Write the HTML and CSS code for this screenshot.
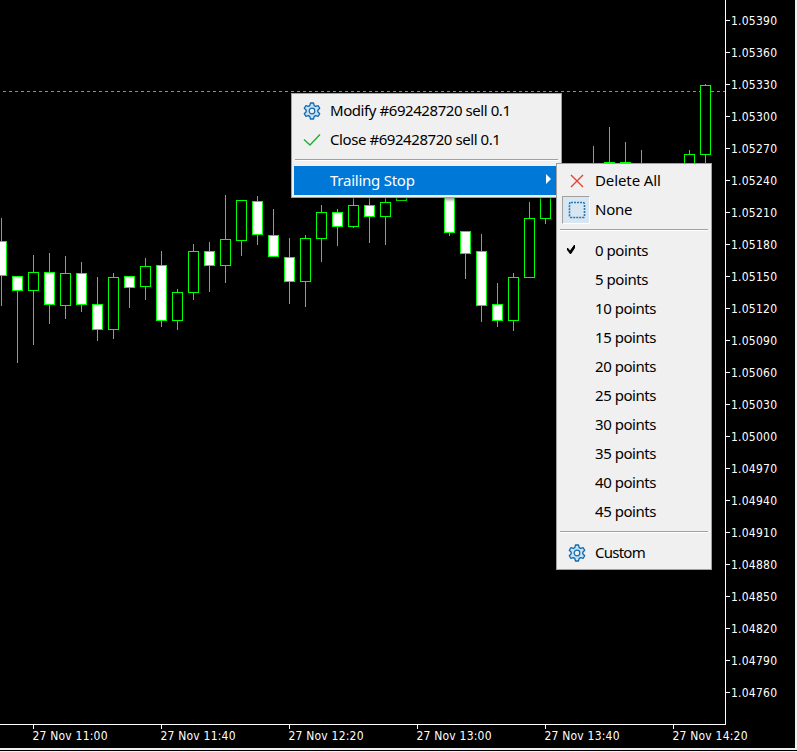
FILE: index.html
```html
<!DOCTYPE html>
<html lang="en">
<head>
<meta charset="utf-8">
<title>Chart</title>
<link rel="stylesheet" href="styles.css">
</head>
<body>
<svg class="chart" id="chart" width="797" height="752" viewBox="0 0 797 752" shape-rendering="crispEdges">
  <path class="price-line" d="M3 91.5H725"/>
  <g id="candles"></g>
  <path class="axis" d="M0 724.5H726M725.5 0V725"/>
  <g id="labels"></g>
  <path class="frame" d="M795 0h2v752H0v-4h795z"/>
  <path class="frame-line" d="M0 750.5H797"/>
</svg>

<svg class="defs" width="0" height="0">
  <symbol id="gear" viewBox="0 0 18 18">
    <path d="M7.500 1h3l.7 2.600 1.400.8 2.600-.7 1.500 2.600-1.900 1.900v1.600l1.900 1.900-1.500 2.600-2.600-.7-1.400.8-.7 2.600h-3l-.7-2.600-1.400-.8-2.600.7-1.500-2.600 1.900-1.900V8.200L1.300 6.300l1.500-2.600 2.600.7 1.400-.8z" fill="#c4e2f8" stroke="#1268aa" stroke-width="1.300" stroke-linejoin="round"/>
    <circle cx="9" cy="9" r="2.800" fill="#f0f0f0" stroke="#1268aa" stroke-width="1.200"/>
  </symbol>
</svg>

<div class="menu menu-main">
  <div class="item"><span class="icon"><svg width="18" height="18"><use href="#gear"/></svg></span><span class="label wide">Modify #692428720 sell 0.1</span></div>
  <div class="item"><span class="icon"><svg width="18" height="18"><path d="M1 8.500L7 14L17 3.500" fill="none" stroke="#22ac38" stroke-width="1.400"/></svg></span><span class="label wide">Close #692428720 sell 0.1</span></div>
  <div class="separator"></div>
  <div class="item selected"><span class="icon"></span><span class="label">Trailing Stop</span><svg class="arrow" width="6" height="10"><path d="M0 0L5 5L0 10z" fill="#fff"/></svg></div>
</div>

<div class="menu menu-sub">
  <div class="item"><span class="icon"><svg width="18" height="18"><path d="M3 3L15 15M15 3L3 15" stroke="#dc4438" stroke-width="1.400"/></svg></span><span class="label delete">Delete All</span></div>
  <div class="item"><span class="icon checked"><svg width="18" height="18"><rect x="1.500" y="1.500" width="15" height="15" rx="1.500" fill="none" stroke="#2878b4" stroke-width="1.600" stroke-dasharray="2 1"/></svg></span><span class="label">None</span></div>
  <div class="separator"></div>
  <div class="item"><span class="icon"><svg class="tick" width="9" height="9"><path d="M0 3h1l2 2.500L7 0h1v3L4 9H3L0 5z" fill="#000"/></svg></span><span class="label points">0 points</span></div>
  <div class="item"><span class="icon"></span><span class="label points">5 points</span></div>
  <div class="item"><span class="icon"></span><span class="label points">10 points</span></div>
  <div class="item"><span class="icon"></span><span class="label points">15 points</span></div>
  <div class="item"><span class="icon"></span><span class="label points">20 points</span></div>
  <div class="item"><span class="icon"></span><span class="label points">25 points</span></div>
  <div class="item"><span class="icon"></span><span class="label points">30 points</span></div>
  <div class="item"><span class="icon"></span><span class="label points">35 points</span></div>
  <div class="item"><span class="icon"></span><span class="label points">40 points</span></div>
  <div class="item"><span class="icon"></span><span class="label points">45 points</span></div>
  <div class="separator"></div>
  <div class="item"><span class="icon"><svg width="18" height="18"><use href="#gear"/></svg></span><span class="label custom">Custom</span></div>
</div>
<script src="chart.js"></script>
</body>
</html>
```
FILE: styles.css
```css
html, body {
  margin: 0;
  width: 797px;
  height: 752px;
  overflow: hidden;
  background: #000;
}

.chart { display: block; }
.defs { position: absolute; }

.price-line { stroke: #32cd32; stroke-dasharray: 3 3; }
.axis { stroke: #fff; fill: none; }
.frame { fill: #f0f0f0; }
.frame-line { stroke: #000; }
.wick { fill: #0f0; }
.body-up { fill: #000; stroke: #0f0; }
.body-down { fill: #fff; stroke: #0f0; }
.tick-mark { fill: #fff; }
.axis-text {
  fill: #fff;
  font: 12px "DejaVu Sans Condensed", "DejaVu Sans", sans-serif;
  font-stretch: condensed;
}

.menu {
  position: absolute;
  box-sizing: border-box;
  border: 1px solid #a0a0a0;
  background: #f0f0f0;
  box-shadow: 2px 2px 3px rgba(0, 0, 0, .4);
  font: 15px/29px "Noto Sans", sans-serif;
  color: #000;
  padding: 2px;
}
.menu-main { left: 291px; top: 93px; width: 271px; height: 105px; }
.menu-sub { left: 556px; top: 163px; width: 156px; height: 407px; }

.item { display: flex; align-items: center; height: 29px; }
.icon {
  box-sizing: border-box;
  flex: none;
  display: flex;
  align-items: center;
  justify-content: center;
  width: 28px;
  height: 28px;
  margin: 0 5px 0 3px;
  padding-left: 2px;
}
.icon.checked {
  border: 1px solid #a0a0a0;
  border-right-color: #fff;
  border-bottom-color: #fff;
  background: #d8e6f2;
}
.tick { margin: -3px 12px 0 0; }
.label { white-space: nowrap; letter-spacing: -.25px; }
.wide { letter-spacing: -.43px; }
.points { letter-spacing: -.45px; }
.custom { letter-spacing: -.75px; }
.delete { letter-spacing: -.1px; }
.selected { background: #0078d7; color: #fff; }
.arrow { margin: -4px 7px 0 auto; }
.separator {
  height: 1px;
  margin: 5px 1px 5px;
  background: #a0a0a0;
  border-bottom: 1px solid #fff;
}
```
FILE: chart.js
```js
// [centre x, high, low, body top, body bottom, falling]
const candles = [
  [1,218,306,241,276,1],[17,276,363,276,291,1],[33,255,345,272,291,0],
  [49,253,324,272,305,1],[65,256,319,273,306,0],[81,262,312,273,305,1],
  [97,277,341,304,330,1],[113,273,339,277,330,0],[129,276,308,276,288,1],
  [145,258,300,266,287,0],[161,251,327,265,321,1],[177,289,330,292,321,0],
  [193,244,300,251,293,0],[209,242,292,251,266,1],[225,195,283,239,266,0],
  [241,200,256,200,241,0],[257,196,245,201,235,1],[273,209,257,235,257,1],
  [289,238,304,257,282,1],[305,235,307,238,282,0],[321,205,262,212,239,0],
  [337,209,246,212,227,1],[353,190,228,205,227,0],[369,190,243,205,217,1],
  [385,190,245,202,217,0],[401,185,201,185,201,0],[449,185,236,185,233,1],
  [465,231,279,231,254,1],[481,234,322,251,306,1],[497,283,327,304,321,1],
  [513,273,331,277,321,0],[529,202,278,218,278,0],[545,185,224,185,219,0],
  [593,146,180,170,180,0],[609,127,180,162,180,0],[625,142,180,162,180,0],
  [641,150,180,170,180,0],[689,150,180,154,180,0],[705,84,180,85,155,0]
];
document.getElementById('candles').innerHTML = candles.map(([x, h, l, t, b, f]) =>
  `<rect class="wick" x="${x}" y="${h}" width="1" height="${l - h}"/>` +
  `<rect class="${f ? 'body-down' : 'body-up'}" x="${x - 4.5}" y="${t + .5}" width="10" height="${b - t - 1}"/>`
).join('');

let out = '';
for (let i = 0; i < 22; i++) {
  const y = 20 + i * 32;
  out += `<rect class="tick-mark" x="726" y="${y}" width="4" height="1"/>` +
    `<text class="axis-text" x="731" y="${y + 5}" textLength="46">${(1.0539 - i * .0003).toFixed(5)}</text>`;
}
['11:00', '11:40', '12:20', '13:00', '13:40', '14:20'].forEach((t, i) => {
  const x = 33 + i * 128;
  out += `<rect class="tick-mark" x="${x}" y="725" width="1" height="4"/>` +
    `<text class="axis-text" x="${x - .5}" y="740" textLength="75">27 Nov ${t}</text>`;
});
document.getElementById('labels').innerHTML = out;
```
